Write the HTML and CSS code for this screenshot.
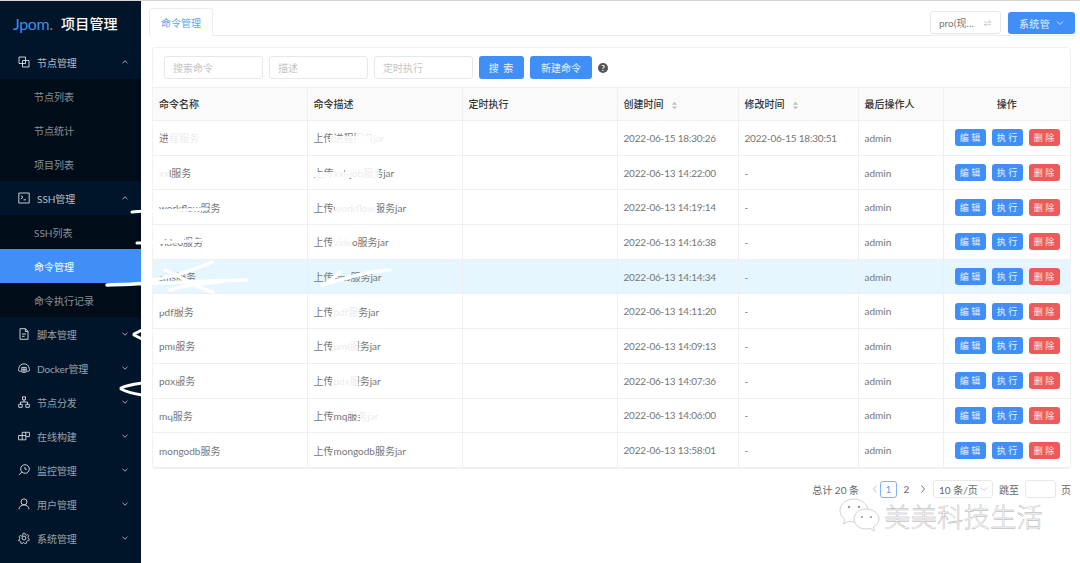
FILE: index.html
```html
<!DOCTYPE html>
<html lang="zh-CN">
<head>
<meta charset="utf-8">
<title>命令管理</title>
<link rel="stylesheet" href="styles.css">
</head>
<body>
<div class="app">
  <aside class="sider">
    <div class="brand"><span class="logo">Jpom<i class="logo-dot">.</i></span><span class="brand-title">项目管理</span></div>
    <nav class="menu">
      <div class="menu-item open">
        <svg class="mi" viewBox="0 0 12 12"><path d="M1 1h6.500v6.500H1zM4.500 4.500H11V11H4.500z"/></svg>
        <span class="mt">节点管理</span><svg class="chev" viewBox="0 0 8 8"><path d="M1.500 5.200 4 2.800l2.500 2.400"/></svg>
      </div>
      <div class="sub">节点列表</div>
      <div class="sub">节点统计</div>
      <div class="sub">项目列表</div>
      <div class="menu-item open">
        <svg class="mi" viewBox="0 0 12 12"><path d="M.8 1h10.400v10H.8zM2.800 3.500 5 5.300 2.800 7M5.500 7.800h2.500"/></svg>
        <span class="mt">SSH管理</span><svg class="chev" viewBox="0 0 8 8"><path d="M1.500 5.200 4 2.800l2.500 2.400"/></svg>
      </div>
      <div class="sub">SSH列表</div>
      <div class="sub active">命令管理</div>
      <div class="sub">命令执行记录</div>
      <div class="menu-item">
        <svg class="mi" viewBox="0 0 12 12"><path d="M2 .7h5.500L10 3.300v8H2zM7.300.7v2.800H10M4 6h4M4 8.300h2.500"/></svg>
        <span class="mt">脚本管理</span><svg class="chev" viewBox="0 0 8 8"><path d="M1.500 2.800 4 5.200l2.500-2.400"/></svg>
      </div>
      <div class="menu-item">
        <svg class="mi" viewBox="0 0 12 12"><path d="M2.800 9.300H2A1.700 1.700 0 0 1 .9 6.300C1.200 3.500 3.400 1.800 6 1.800s4.800 1.700 5.100 4.500A1.700 1.700 0 0 1 10 9.300h-.8M3.800 5.400h4.400v4.800H3.800zM3.800 7.800h4.400M6 5.400v4.800"/></svg>
        <span class="mt">Docker管理</span><svg class="chev" viewBox="0 0 8 8"><path d="M1.500 2.800 4 5.200l2.500-2.400"/></svg>
      </div>
      <div class="menu-item">
        <svg class="mi" viewBox="0 0 12 12"><path d="M4.500.8h3v3h-3zM.7 8.300h3.500v3H.7zM7.800 8.300h3.500v3H7.800zM6 3.800V6M2.500 8.300V6h7v2.300"/></svg>
        <span class="mt">节点分发</span><svg class="chev" viewBox="0 0 8 8"><path d="M1.500 2.800 4 5.200l2.500-2.400"/></svg>
      </div>
      <div class="menu-item">
        <svg class="mi" viewBox="0 0 12 12"><path d="M.6 5.500h7.200v4.300H.6zM4.200 5.500v4.300M4.200 5.500V2.300h7.200v4.300H7.800M7.800 2.300v3.200"/></svg>
        <span class="mt">在线构建</span><svg class="chev" viewBox="0 0 8 8"><path d="M1.500 2.800 4 5.200l2.500-2.400"/></svg>
      </div>
      <div class="menu-item">
        <svg class="mi" viewBox="0 0 12 12"><circle cx="7" cy="5" r="4.300"/><path d="M3.900 8 1 11M7 3v2.200h1.800"/></svg>
        <span class="mt">监控管理</span><svg class="chev" viewBox="0 0 8 8"><path d="M1.500 2.800 4 5.200l2.500-2.400"/></svg>
      </div>
      <div class="menu-item">
        <svg class="mi" viewBox="0 0 12 12"><circle cx="6" cy="3.900" r="3"/><path d="M1 11.300C1.200 8.600 3.300 6.900 6 6.900s4.800 1.700 5 4.400"/></svg>
        <span class="mt">用户管理</span><svg class="chev" viewBox="0 0 8 8"><path d="M1.500 2.800 4 5.200l2.500-2.400"/></svg>
      </div>
      <div class="menu-item">
        <svg class="mi" viewBox="0 0 12 12"><circle cx="6" cy="6" r="1.900"/><path d="M5 .7h2l.4 1.600 1.400.6 1.400-.8 1.200 1.500-1 1.300.2 1.500 1.300.8-.6 1.900-1.600-.1-1 1.100.1 1.600-1.900.6-.9-1.300H5.200l-.9 1.300-1.900-.6.1-1.600-1-1.100-1.600.1L-.1 8.300l1.300-.8.2-1.500-1-1.300 1.200-1.500 1.400.8 1.400-.6z" transform="translate(.6 .6) scale(.9)"/></svg>
        <span class="mt">系统管理</span><svg class="chev" viewBox="0 0 8 8"><path d="M1.500 2.800 4 5.200l2.500-2.400"/></svg>
      </div>
    </nav>
  </aside>
  <main class="main">
    <header class="topbar">
      <div class="tab">命令管理</div>
      <div class="top-actions">
        <div class="ws-select"><span>pro(现…</span><svg class="swap" viewBox="0 0 10 8"><path d="M1 3h8L6.500 1M9 5.500H1L3.500 7.500"/></svg></div>
        <button class="user-btn">系统管 <svg class="user-chev" viewBox="0 0 8 8"><path d="M1 2.500 4 5.500l3-3"/></svg></button>
      </div>
    </header>
    <section class="card">
      <div class="filters">
        <div class="input">搜索命令</div>
        <div class="input">描述</div>
        <div class="input">定时执行</div>
        <button class="btn search-btn">搜 索</button>
        <button class="btn new-btn">新建命令</button>
        <span class="help">?</span>
      </div>
      <table class="table">
        <colgroup><col class="c1"><col class="c2"><col class="c3"><col class="c4"><col class="c5"><col class="c6"><col class="c7"></colgroup>
        <thead>
          <tr>
            <th>命令名称</th><th>命令描述</th><th>定时执行</th>
            <th>创建时间<svg class="sort" viewBox="0 0 8 10"><path d="M4 .8 7 4H1zM4 9.200 1 6h6z"/></svg></th>
            <th>修改时间<svg class="sort" viewBox="0 0 8 10"><path d="M4 .8 7 4H1zM4 9.200 1 6h6z"/></svg></th>
            <th>最后操作人</th><th class="center">操作</th>
          </tr>
        </thead>
        <tbody>
          <tr><td>进程服务</td><td>上传进程服务jar</td><td></td><td class="date">2022-06-15 18:30:26</td><td class="date">2022-06-15 18:30:51</td><td>admin</td><td class="ops"><a class="op">编 辑</a><a class="op">执 行</a><a class="op del">删 除</a></td></tr>
          <tr><td>xxl服务</td><td>上传xxl-job服务jar</td><td></td><td class="date">2022-06-13 14:22:00</td><td>-</td><td>admin</td><td class="ops"><a class="op">编 辑</a><a class="op">执 行</a><a class="op del">删 除</a></td></tr>
          <tr><td>workflow服务</td><td>上传workflow服务jar</td><td></td><td class="date">2022-06-13 14:19:14</td><td>-</td><td>admin</td><td class="ops"><a class="op">编 辑</a><a class="op">执 行</a><a class="op del">删 除</a></td></tr>
          <tr><td>video服务</td><td>上传video服务jar</td><td></td><td class="date">2022-06-13 14:16:38</td><td>-</td><td>admin</td><td class="ops"><a class="op">编 辑</a><a class="op">执 行</a><a class="op del">删 除</a></td></tr>
          <tr class="hl"><td>sms服务</td><td>上传sms服务jar</td><td></td><td class="date">2022-06-13 14:14:34</td><td>-</td><td>admin</td><td class="ops"><a class="op">编 辑</a><a class="op">执 行</a><a class="op del">删 除</a></td></tr>
          <tr><td>pdf服务</td><td>上传pdf服务jar</td><td></td><td class="date">2022-06-13 14:11:20</td><td>-</td><td>admin</td><td class="ops"><a class="op">编 辑</a><a class="op">执 行</a><a class="op del">删 除</a></td></tr>
          <tr><td>pml服务</td><td>上传pml服务jar</td><td></td><td class="date">2022-06-13 14:09:13</td><td>-</td><td>admin</td><td class="ops"><a class="op">编 辑</a><a class="op">执 行</a><a class="op del">删 除</a></td></tr>
          <tr><td>pdx服务</td><td>上传pdx服务jar</td><td></td><td class="date">2022-06-13 14:07:36</td><td>-</td><td>admin</td><td class="ops"><a class="op">编 辑</a><a class="op">执 行</a><a class="op del">删 除</a></td></tr>
          <tr><td>mq服务</td><td>上传mq服务jar</td><td></td><td class="date">2022-06-13 14:06:00</td><td>-</td><td>admin</td><td class="ops"><a class="op">编 辑</a><a class="op">执 行</a><a class="op del">删 除</a></td></tr>
          <tr><td>mongodb服务</td><td>上传mongodb服务jar</td><td></td><td class="date">2022-06-13 13:58:01</td><td>-</td><td>admin</td><td class="ops"><a class="op">编 辑</a><a class="op">执 行</a><a class="op del">删 除</a></td></tr>
        </tbody>
      </table>
    </section>
    <footer class="pager">
      <span class="total">总计 20 条</span>
      <svg class="arrow muted" viewBox="0 0 8 10"><path d="M5.500 1.500 2.500 5l3 3.500"/></svg>
      <span class="page current">1</span>
      <span class="page">2</span>
      <svg class="arrow" viewBox="0 0 8 10"><path d="M2.500 1.500 5.500 5l-3 3.500"/></svg>
      <span class="size">10 条/页<svg class="size-chev" viewBox="0 0 8 8"><path d="M1 2.500 4 5.500l3-3"/></svg></span>
      <span class="jump">跳至</span>
      <span class="jump-input"></span>
      <span class="jump-end">页</span>
    </footer>
    <div class="watermark">
      <svg class="wechat" viewBox="0 0 42 36"><path class="wb" d="M15 1C7.500 1 1 6 1 12.500c0 3.800 2 6.800 5 9l-1.500 4.500 5.500-2.800c2 .6 3.500.8 5 .8 8 0 14-5.300 14-11.500S22.500 1 15 1z"/><path class="wb" d="M27 11c-6.800 0-12 4.500-12 10s5.200 10 12 10c1.300 0 2.600-.2 3.800-.6l4.700 2.600-1.200-3.900C38 27 40 24.200 40 21c0-5.500-6-10-13-10z"/><circle cx="10" cy="9" r="1.200"/><circle cx="20" cy="9" r="1.200"/><circle cx="23" cy="19" r="1.100"/><circle cx="32" cy="19" r="1.100"/></svg>
      <span class="wm-text">美美科技生活</span>
    </div>
  </main>
  <svg class="redactions" viewBox="0 0 1080 563">
    <g class="scribble">
      <path d="M132 212c20-2 50-1 75-3"/>
      <path d="M137 243c20 0 45-1 65-3"/>
      <path class="thick" d="M107 285c40-1 90-4 140-5M152 280c30-5 45-12 60-18M165 270c20 8 30 18 48 22M170 290c25-8 40-6 55-9"/>
      <path class="thick" d="M322 285c20-6 50-15 68-15M340 272c-6 6-12 10-16 13"/>
      <path d="M134 334l8-4M134 335l8 4" />
      <path d="M121 388c6-3 14-4 21-5M121 389c6 3 14 5 21 6"/>
    </g>
    <g class="patches">
      <rect x="168" y="130" width="34" height="16"/><rect x="356" y="130" width="30" height="15"/><rect x="330" y="136" width="40" height="12"/>
      <rect x="155" y="165" width="14" height="16"/><rect x="345" y="164" width="34" height="14"/><rect x="315" y="172" width="30" height="10"/>
      <rect x="156" y="200" width="30" height="4"/><rect x="335" y="200" width="42" height="15"/>
      <rect x="156" y="234" width="30" height="5"/><rect x="332" y="235" width="20" height="14"/>
      <rect x="157" y="306" width="8" height="6"/><rect x="168" y="304" width="14" height="5"/><rect x="332" y="304" width="26" height="14"/>
      <rect x="157" y="340" width="20" height="5"/><rect x="332" y="340" width="26" height="14"/>
      <rect x="168" y="374" width="12" height="6"/><rect x="332" y="374" width="26" height="13"/>
      <rect x="167" y="410" width="5" height="6"/><rect x="345" y="408" width="30" height="6"/><rect x="360" y="414" width="20" height="8"/>
      <rect x="166" y="444" width="22" height="5"/><rect x="330" y="444" width="32" height="5"/>
    </g>
  </svg>
</div>
</body>
</html>
```
FILE: styles.css
```css
* { box-sizing: border-box; }
html, body { margin: 0; height: 100%; }
body {
  font-family: "Lato", "Noto Sans CJK SC", sans-serif;
  font-size: 10px;
  color: #666;
  background: #fff;
  overflow: hidden;
}
.app {
  position: relative;
  display: flex;
  width: 1080px;
  height: 563px;
  border-top: 1px solid #d4d4d4;
}

/* sidebar */
.sider {
  width: 141px;
  flex: none;
  background: #001529;
  color: rgba(255,255,255,.6);
}
.brand { height: 44px; display: flex; align-items: center; padding-left: 13px; gap: 8px; }
.logo { font-family: "Lato", sans-serif; font-size: 16px; font-weight: 400; color: #3f8fe8; letter-spacing: -.4px; width: 40px; }
.logo-dot { font-style: normal; color: #d9662c; }
.brand-title { font-size: 14px; font-weight: 500; color: #fff; letter-spacing: .2px; }
.menu { display: flex; flex-direction: column; }
.menu-item { height: 34px; display: flex; align-items: center; padding-left: 18px; position: relative; }
.mi { width: 12px; height: 12px; fill: none; stroke: #d2d6da; stroke-width: .95; flex: none; }
.mt { margin-left: 7px; letter-spacing: -.05px; }
.menu-item.open .mt { color: rgba(255,255,255,.72); }
.chev { width: 8px; height: 8px; fill: none; stroke: rgba(255,255,255,.62); stroke-width: 1; position: absolute; left: 121px; top: 13px; }
.sub { height: 34px; display: flex; align-items: center; padding-left: 34px; background: #000c17; color: rgba(255,255,255,.55); }
.sub.active { background: #3f8ff6; color: #fff; }

/* main */
.main { flex: 1; min-width: 0; position: relative; }
.topbar {
  height: 35px;
  margin-left: 8px;
  margin-right: 5px;
  border-bottom: 1px solid #eceded;
  display: flex;
  justify-content: space-between;
}
.tab {
  width: 64px;
  height: 28px;
  margin-top: 7px;
  border: 1px solid #eceded;
  border-bottom: 0;
  border-radius: 3px 3px 0 0;
  background: #fff;
  color: #5aa2f7;
  display: flex;
  align-items: center;
  justify-content: center;
}
.top-actions { display: flex; gap: 7px; align-items: flex-start; }
.ws-select {
  width: 71px;
  height: 23px;
  margin-top: 10px;
  border: 1px solid #e4e6e8;
  border-radius: 3px;
  display: flex;
  align-items: center;
  justify-content: space-between;
  padding: 0 8px;
  color: #777;
}
.swap { width: 9px; height: 8px; fill: none; stroke: #b9bcbf; stroke-width: .8; }
.user-btn {
  width: 67px;
  height: 22px;
  margin-top: 11px;
  border: 0;
  border-radius: 3px;
  background: #3f8ff6;
  color: #e6f0fd;
  font: inherit;
  letter-spacing: .4px;
  display: flex;
  align-items: center;
  justify-content: center;
  gap: 6px;
}
.user-chev { width: 8px; height: 8px; fill: none; stroke: #dbe9fb; stroke-width: .9; }

.card {
  margin: 11px 9px 0 11px;
  border: 1px solid #f1f2f2;
  border-radius: 3px;
  height: 422px;
}
.filters { height: 39px; display: flex; align-items: center; padding: 0 0 0 11px; gap: 6px; }
.input {
  width: 99px;
  height: 23px;
  border: 1px solid #e6e8ea;
  border-radius: 3px;
  color: #c4c4c4;
  display: flex;
  align-items: center;
  padding-left: 8px;
}
.btn {
  height: 23px;
  border: 0;
  border-radius: 3px;
  background: #3f8ff6;
  color: #eaf3fe;
  font: inherit;
  padding: 0;
}
.search-btn { width: 45px; letter-spacing: 1px; }
.new-btn { width: 62px; }
.help {
  width: 10px;
  height: 10px;
  border-radius: 50%;
  background: #555;
  color: #fff;
  font-size: 8px;
  font-weight: 700;
  display: flex;
  align-items: center;
  justify-content: center;
}

.table { width: 917px; border-collapse: collapse; table-layout: fixed; }
.c1 { width: 154px; }
.c2, .c3 { width: 155px; }
.c4 { width: 121px; }
.c5 { width: 120px; }
.c6 { width: 85px; }
.c7 { width: 127px; }
.table th, .table td {
  padding: 0 6px;
  border: 1px solid #eeeff0;
  text-align: left;
  white-space: nowrap;
  overflow: hidden;
}
.table th:first-child, .table td:first-child { border-left: 0; }
.table th:last-child, .table td:last-child { border-right: 0; }
.table th { height: 33px; padding-bottom: 2px; background: #fafafa; color: #333; font-weight: 500; }
.table td { height: 34.7px; color: #767676; }
.table td.date { letter-spacing: -.2px; }
.table th.center { text-align: center; }
.sort { width: 7px; height: 9px; fill: #bfbfbf; margin-left: 7px; vertical-align: -2px; }
.hl td { background: #e6f6fe; }
.ops { padding: 0 0 0 11px !important; font-size: 0; }
.op {
  display: inline-flex;
  width: 31px;
  height: 17px;
  margin-right: 6px;
  align-items: center;
  justify-content: center;
  background: #3f8ff6;
  border-radius: 3px;
  color: #e4effd;
  font-size: 9px;
}
.op.del { background: #ee5a5a; margin-right: 0; color: #fde6e6; }

/* pager */
.pager {
  margin: 10px 9px 0 0;
  height: 20px;
  display: flex;
  align-items: center;
  justify-content: flex-end;
  color: #666;
}
.total { margin-right: 12px; }
.arrow { width: 8px; height: 10px; fill: none; stroke: #666; stroke-width: .9; }
.arrow.muted { stroke: #bbb; }
.page { width: 17px; height: 17px; display: flex; align-items: center; justify-content: center; margin: 0 0 0 1px; border-radius: 3px; }
.page.current { border: 1px solid #7db3f7; color: #5aa2f7; }
.page + .arrow { margin-left: 4px; }
.size {
  width: 60px;
  height: 18px;
  margin-left: 6px;
  border: 1px solid #e6e8ea;
  border-radius: 3px;
  display: flex;
  align-items: center;
  justify-content: space-between;
  padding: 0 4px 0 5px;
}
.size-chev { width: 8px; height: 8px; fill: none; stroke: #bbb; stroke-width: .8; }
.jump { margin-left: 6px; }
.jump-input { width: 31px; height: 18px; border: 1px solid #e6e8ea; border-radius: 3px; margin-left: 6px; }
.jump-end { margin-left: 5px; }

/* overlays */
.watermark {
  position: absolute;
  left: 698px;
  top: 497px;
  display: flex;
  align-items: center;
  gap: 3px;
}
.wechat { width: 42px; height: 36px; fill: #9a9a9a; }
.wb { fill: #fff; stroke: #bdbdbd; stroke-width: .7; }
.wm-text {
  font-family: "Noto Sans CJK SC", sans-serif;
  font-size: 26.5px;
  font-weight: 300;
  line-height: 30px;
  color: #fff;
  -webkit-text-stroke: .4px #aaa;
}
.redactions { position: absolute; left: 0; top: -1px; width: 1080px; height: 563px; pointer-events: none; }
.scribble path { fill: none; stroke: #fff; stroke-width: 3; stroke-linecap: round; }
.scribble path.thick { stroke-width: 3.5; }
.patches rect { fill: #fff; opacity: .85; }
```
